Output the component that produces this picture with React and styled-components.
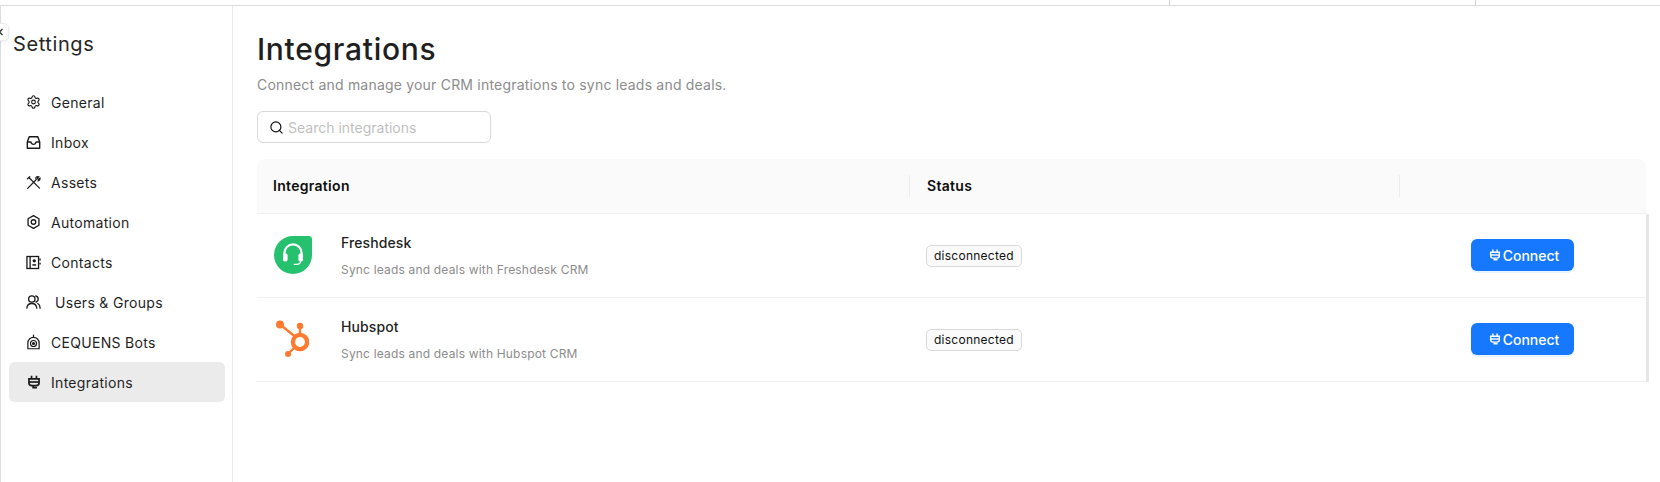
import React from 'react'
import styled, { createGlobalStyle } from 'styled-components'
import { Search, Settings } from 'lucide-react'

const GlobalStyle = createGlobalStyle`
    html, body {
        margin: 0;
        padding: 0;
        background: #fff;
        font-family: Inter, "Noto Sans", sans-serif;
    }
    * { box-sizing: border-box; }
`;

const InboxIcon = () => (
    <svg width="15" height="15" viewBox="0 0 16 16" fill="none" stroke="currentColor" strokeWidth="1.5" strokeLinejoin="round">
        <path d="M3.4 1.8h9.2l2 5.6v6.8H1.4V7.4z" />
        <path d="M1.4 7.4h3.8c.4 1.8 1.4 2.6 2.8 2.6s2.4-.8 2.8-2.6h3.8" />
    </svg>
)

const ToolsIcon = () => (
    <svg width="15" height="15" viewBox="0 0 16 16" fill="none" stroke="currentColor" strokeWidth="1.3" strokeLinecap="round">
        <path d="M1.8 14.2L11 4.8" />
        <path d="M3.6 3.2L14.4 14" />
        <path d="M1.6 4L4 1.8" />
        <path d="M10.2 3.4c.6-1.4 2-2 3.4-1.5l-1.6 1.7 1.3 1.2 1.6-1.5c.3 1.5-.6 2.8-2.2 3.1" />
    </svg>
)

const AutomationIcon = () => (
    <svg width="15" height="16" viewBox="0 0 16 16" fill="none" stroke="currentColor" strokeWidth="1.4" strokeLinejoin="round">
        <path d="M8 1.2l5.8 3.3v7L8 14.8l-5.8-3.3v-7z" />
        <circle cx="8" cy="8" r="2.4" />
    </svg>
)

const ContactsIcon = () => (
    <svg width="15" height="15" viewBox="0 0 16 16" fill="none" stroke="currentColor" strokeWidth="1.4">
        <rect x="1" y="1.6" width="12.4" height="12.8" />
        <path d="M4.4 1.6v12.8" />
        <circle cx="8.8" cy="6.2" r="1.1" fill="currentColor" />
        <path d="M6.8 10.6h4" strokeWidth="1.6" />
        <path d="M15 3.8v2M15 8.2v2" strokeWidth="1.4" />
    </svg>
)

const UsersIcon = () => (
    <svg width="16" height="16" viewBox="0 0 16 16" fill="none" stroke="currentColor" strokeWidth="1.4" strokeLinecap="round">
        <circle cx="6.2" cy="4.8" r="3.4" />
        <path d="M.9 14.6c.3-3.2 2.5-5 5.3-5s5 1.8 5.3 5" />
        <path d="M10.4 1.6c1.6.3 2.6 1.6 2.6 3.2s-1 2.8-2.4 3.2" />
        <path d="M12.6 9.6c1.5.8 2.4 2.6 2.5 5" />
    </svg>
)

const BotIcon = () => (
    <svg width="15" height="16" viewBox="0 0 16 16" fill="none" stroke="currentColor" strokeWidth="1.3">
        <path d="M2 15.2V9a6 6 0 0 1 12 0v6.2z" />
        <circle cx="8" cy="9.6" r="3.2" />
        <circle cx="8" cy="9.6" r="1" fill="currentColor" />
        <path d="M8 .2v3" />
    </svg>
)

const PlugIcon = ({size = 14}) => (
    <svg width={size} height={size} viewBox="0 0 16 16" fill="none" stroke="currentColor" strokeWidth="1.9">
        <path d="M5.2 .8v3.6M10.8 .8v3.6" />
        <path d="M2.2 4.4h11.6v4.4a3.4 3.4 0 0 1-3.4 3.4H5.6a3.4 3.4 0 0 1-3.4-3.4z" />
        <path d="M2.2 8h11.6" />
        <path d="M7 12.2v2.2h4.4" />
    </svg>
)

const FreshdeskLogo = () => (
    <svg width="40" height="40" viewBox="0 0 40 40">
        <path d="M20 1h15.5A3.5 3.5 0 0 1 39 4.5V20a19 19 0 0 1-38 0A19 19 0 0 1 20 1z" fill="#25c16f" />
        <path d="M11.4 21v-3a8.6 8.6 0 0 1 17.2 0v3" fill="none" stroke="#fff" strokeWidth="2.2" />
        <rect x="10" y="18.6" width="4.6" height="8" rx="1.8" fill="#fff" />
        <rect x="25.4" y="18.6" width="4.6" height="8" rx="1.8" fill="#fff" />
        <path d="M27.6 26c0 2.4-1.6 3.4-4.2 3.4h-2.6" fill="none" stroke="#fff" strokeWidth="1.3" />
    </svg>
)

const HubspotLogo = () => (
    <svg width="36" height="38" viewBox="0 0 36 38" fill="none">
        <circle cx="27" cy="22" r="7.1" stroke="#ff7a2f" strokeWidth="4.3" />
        <path d="M7 4.5l15 12M27 6v9M21 28l-6 6" stroke="#ff7a2f" strokeWidth="2.4" />
        <circle cx="7" cy="4.5" r="4" fill="#ff7a2f" />
        <circle cx="27" cy="6" r="3.2" fill="#ff7a2f" />
        <circle cx="15" cy="34" r="3" fill="#ff7a2f" />
    </svg>
)

const navItems = [
    {label: 'General', icon: <Settings size={16} strokeWidth={1.8} />},
    {label: 'Inbox', icon: <InboxIcon />},
    {label: 'Assets', icon: <ToolsIcon />},
    {label: 'Automation', icon: <AutomationIcon />},
    {label: 'Contacts', icon: <ContactsIcon />},
    {label: 'Users & Groups', icon: <UsersIcon />, indent: true},
    {label: 'CEQUENS Bots', icon: <BotIcon />},
    {label: 'Integrations', icon: <PlugIcon />, active: true},
]

const integrations = [
    {name: 'Freshdesk', logo: <FreshdeskLogo />},
    {name: 'Hubspot', logo: <HubspotLogo />},
]

const App = () => {
    return (
        <Page>
            <GlobalStyle />
            <TopBar>
                <TopCell width="306px" />
                <TopCell width="185px" />
            </TopBar>
            <Layout>
                <Sidebar>
                    <CollapseButton>
                        <svg width="8" height="8" viewBox="0 0 8 8" fill="none" stroke="#333" strokeWidth="1.4">
                            <path d="M4.5 1L1.5 4l3 3" />
                        </svg>
                    </CollapseButton>
                    <SidebarTitle>Settings</SidebarTitle>
                    <Nav>
                        {navItems.map(item => (
                            <NavItem key={item.label} $active={item.active}>
                                <NavIcon>{item.icon}</NavIcon>
                                <NavLabel $indent={item.indent}>{item.label}</NavLabel>
                            </NavItem>
                        ))}
                    </Nav>
                </Sidebar>
                <Main>
                    <Title>Integrations</Title>
                    <Subtitle>Connect and manage your CRM integrations to sync leads and deals.</Subtitle>
                    <SearchBox>
                        <Search size={15} strokeWidth={1.9} color="#111" />
                        <SearchInput placeholder="Search integrations" />
                    </SearchBox>
                    <Table>
                        <HeaderRow>
                            <HeaderCell>Integration</HeaderCell>
                            <HeaderCell $divider>Status</HeaderCell>
                            <HeaderCell $divider />
                        </HeaderRow>
                        <Body>
                            {integrations.map(item => (
                                <Row key={item.name}>
                                    <NameCell>
                                        <LogoBox>{item.logo}</LogoBox>
                                        <NameText>
                                            <Name>{item.name}</Name>
                                            <Description>Sync leads and deals with {item.name} CRM</Description>
                                        </NameText>
                                    </NameCell>
                                    <StatusCell>
                                        <Badge>disconnected</Badge>
                                    </StatusCell>
                                    <ActionCell>
                                        <ConnectButton>
                                            <PlugIcon size={12} />
                                            Connect
                                        </ConnectButton>
                                    </ActionCell>
                                </Row>
                            ))}
                            <ScrollThumb />
                        </Body>
                    </Table>
                </Main>
            </Layout>
        </Page>
    )
}

const Page = styled.div`
    height: 482px;
    display: flex;
    flex-direction: column;
    overflow: hidden;
    color: #1f1f1f;
`;

const TopBar = styled.div`
    height: 6px;
    flex: none;
    display: flex;
    justify-content: flex-end;
    border-bottom: 1px solid #dcdcdc;
`;

const TopCell = styled.div`
    width: ${props => props.width};
    border-left: 1px solid #d0d0d0;
`;

const Layout = styled.div`
    flex: 1;
    display: flex;
    min-height: 0;
`;

const Sidebar = styled.aside`
    position: relative;
    width: 233px;
    flex: none;
    padding: 0 7px 0 8px;
    border-left: 1px solid #dcdcdc;
    border-right: 1px solid #e8e8e8;
`;

const CollapseButton = styled.div`
    position: absolute;
    left: -10px;
    top: 17px;
    width: 18px;
    height: 18px;
    display: flex;
    align-items: center;
    padding-left: 6px;
    background: #fff;
    border: 1px solid #ececec;
    border-radius: 5px;
    box-shadow: 0 1px 3px rgba(0, 0, 0, 0.08);
`;

const SidebarTitle = styled.h2`
    margin: 0;
    padding: 24px 0 0 4px;
    height: 76px;
    font-size: 20px;
    line-height: 28px;
    font-weight: 400;
    letter-spacing: 0.6px;
    color: #262626;
`;

const Nav = styled.nav`
    display: flex;
    flex-direction: column;
`;

const NavItem = styled.div`
    height: 40px;
    display: flex;
    align-items: center;
    padding-left: 17px;
    border-radius: 6px;
    font-size: 14px;
    color: #1f1f1f;
    background: ${props => props.$active ? '#ebebeb' : 'transparent'};
`;

const NavIcon = styled.span`
    width: 15px;
    flex: none;
    display: flex;
    align-items: center;
    justify-content: center;
    color: #1a1a1a;
`;

const NavLabel = styled.span`
    margin-left: ${props => props.$indent ? '14px' : '10px'};
    letter-spacing: 0.3px;
`;

const Main = styled.main`
    flex: 1;
    min-width: 0;
    padding: 0 14px 0 24px;
`;

const Title = styled.h1`
    margin: 0;
    padding-top: 24px;
    font-size: 30px;
    line-height: 38px;
    font-weight: 500;
    letter-spacing: 0.7px;
    color: #1f1f1f;
`;

const Subtitle = styled.p`
    margin: 6px 0 0;
    font-size: 14px;
    line-height: 22px;
    letter-spacing: 0.2px;
    color: #8c8c8c;
`;

const SearchBox = styled.label`
    width: 234px;
    height: 32px;
    margin-top: 15px;
    display: flex;
    align-items: center;
    gap: 4px;
    padding: 0 11px;
    border: 1px solid #d9d9d9;
    border-radius: 6px;
`;

const SearchInput = styled.input`
    flex: 1;
    min-width: 0;
    border: 0;
    outline: 0;
    padding: 0;
    background: transparent;
    font: 14px Inter, sans-serif;
    &::placeholder {
        color: #bfbfbf;
    }
`;

const Table = styled.div`
    margin-top: 16px;
`;

const columns = `
    display: grid;
    grid-template-columns: 652px 490px 1fr;
    align-items: center;
`;

const HeaderRow = styled.div`
    ${columns}
    height: 55px;
    background: #fafafa;
    border-radius: 8px 8px 0 0;
    border-bottom: 1px solid #f0f0f0;
`;

const HeaderCell = styled.div`
    height: 22px;
    line-height: 22px;
    padding-left: ${props => props.$divider ? '17px' : '16px'};
    font-size: 14px;
    font-weight: 600;
    letter-spacing: 0.3px;
    color: #0d0d0d;
    border-left: ${props => props.$divider ? '1px solid #ececec' : '0'};
`;

const Body = styled.div`
    position: relative;
    margin-right: -3px;
`;

const ScrollThumb = styled.div`
    position: absolute;
    top: 0;
    right: 0;
    bottom: 0;
    width: 3px;
    border-radius: 2px;
    background: #e6e6e6;
`;

const Row = styled.div`
    ${columns}
    height: 84px;
    border-bottom: 1px solid #f0f0f0;
`;

const NameCell = styled.div`
    display: flex;
    align-items: center;
    padding-left: 16px;
`;

const LogoBox = styled.div`
    width: 68px;
    flex: none;
    display: flex;
    align-items: center;
    padding-bottom: 2px;
`;

const NameText = styled.div`
    display: flex;
    flex-direction: column;
    gap: 7px;
    padding-top: 1px;
`;

const Name = styled.span`
    font-size: 14px;
    line-height: 20px;
    font-weight: 500;
    letter-spacing: 0.1px;
    color: #1f1f1f;
`;

const Description = styled.span`
    font-size: 12px;
    line-height: 20px;
    letter-spacing: 0.18px;
    color: #8c8c8c;
`;

const StatusCell = styled.div`
    padding-left: 17px;
`;

const Badge = styled.span`
    display: inline-block;
    height: 22px;
    padding: 0 7px;
    line-height: 20px;
    font-size: 12px;
    letter-spacing: 0.25px;
    color: #111;
    background: #fafafa;
    border: 1px solid #d9d9d9;
    border-radius: 5px;
`;

const ActionCell = styled.div`
    padding-left: 72px;
`;

const ConnectButton = styled.button`
    width: 103px;
    height: 32px;
    margin-bottom: 1px;
    display: flex;
    align-items: center;
    justify-content: center;
    gap: 2px;
    padding: 0 0 0 3px;
    border: 0;
    border-radius: 6px;
    font: 500 14px Inter, sans-serif;
    color: #fff;
    background: #1677ff;
    box-shadow: 0 2px 0 rgba(5, 145, 255, 0.1);
`;

export default App;
